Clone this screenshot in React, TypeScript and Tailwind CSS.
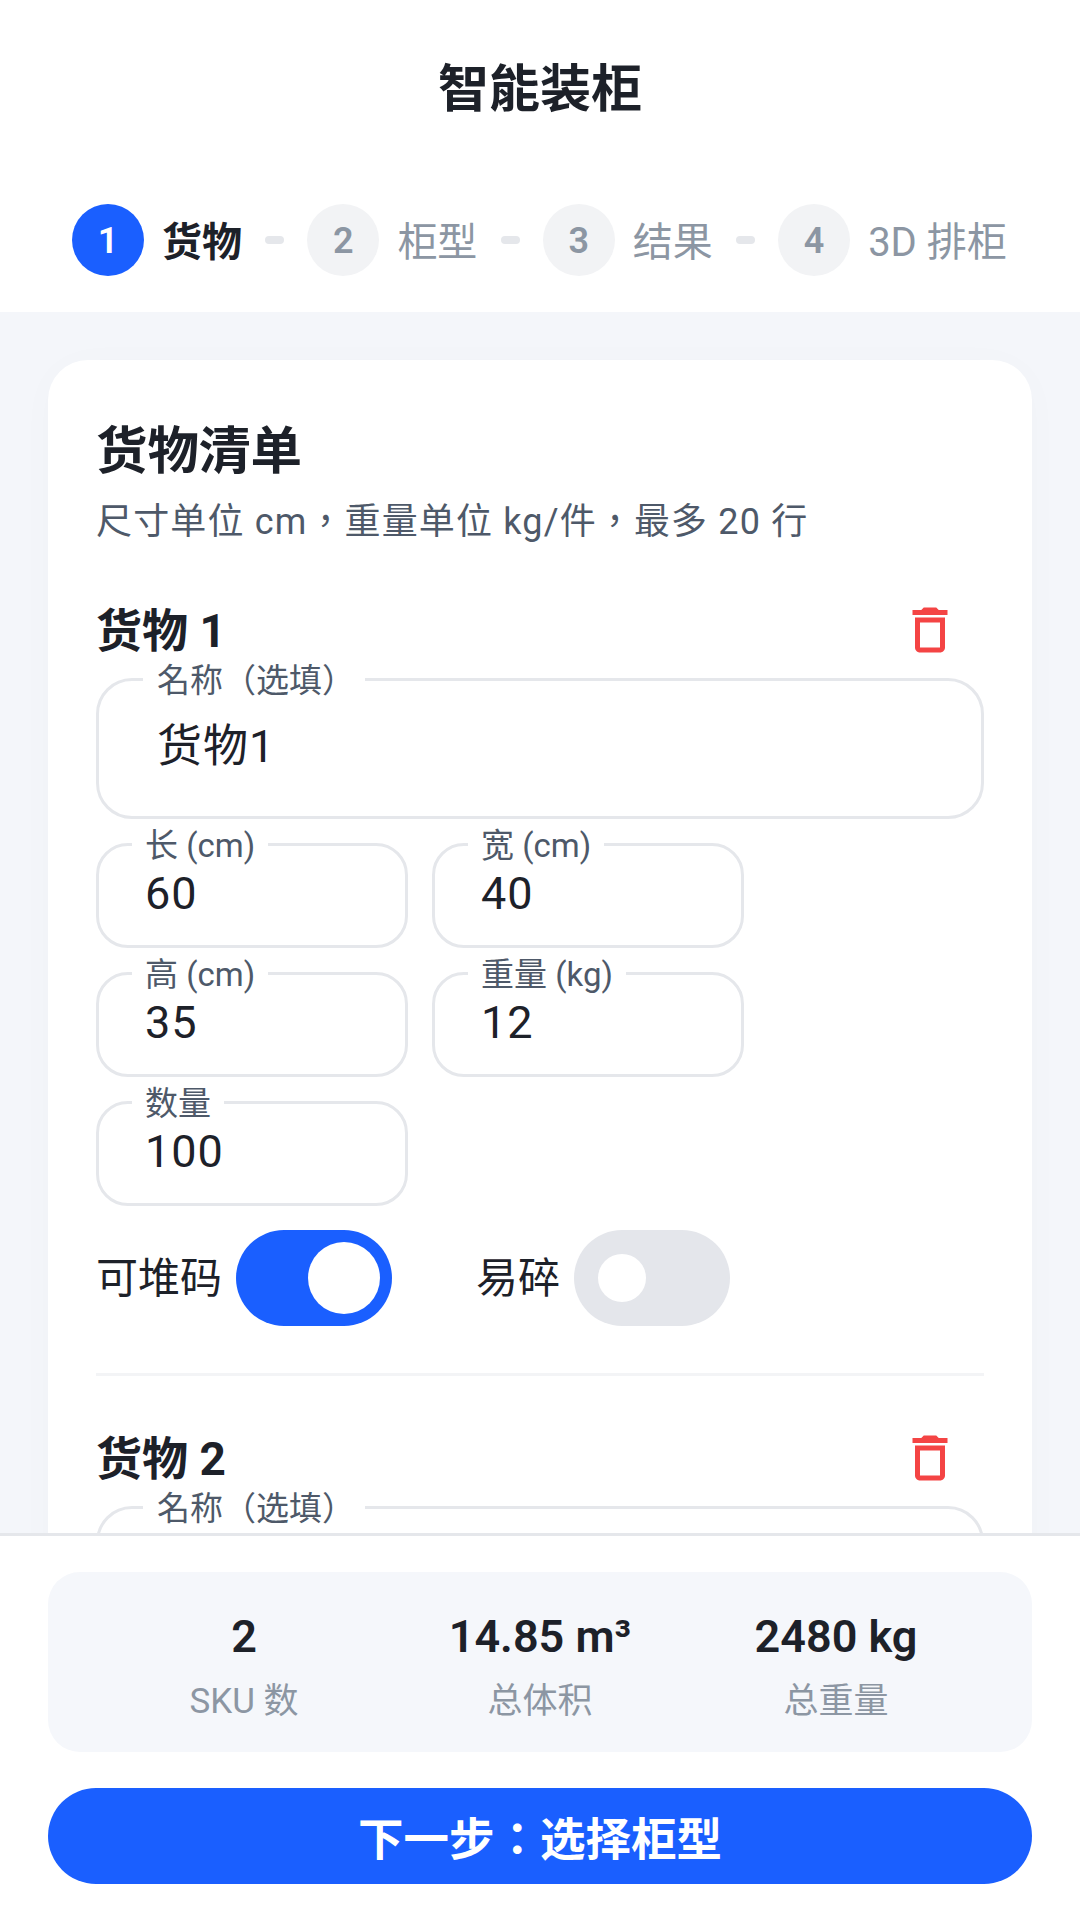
import React, { useState } from 'react';

const FONT = 'font-[Roboto,"Noto_Sans_CJK_TC",sans-serif]';

const STEPS = ['货物', '柜型', '结果', '3D 排柜'];

type Cargo = {
  name: string;
  length: number;
  width: number;
  height: number;
  weight: number;
  qty: number;
  stackable: boolean;
  fragile: boolean;
};

const INITIAL: Cargo[] = [
  { name: '货物1', length: 60, width: 40, height: 35, weight: 12, qty: 100, stackable: true, fragile: false },
  { name: '货物2', length: 75, width: 50, height: 43, weight: 32, qty: 40, stackable: true, fragile: false },
];

function TrashIcon() {
  return (
    <svg viewBox="0 0 24 24" className="w-[60px] h-[60px] fill-[#f44444]">
      <path d="M6 19c0 1.1.9 2 2 2h8c1.1 0 2-.9 2-2V7H6v12zM8 9h8v10H8V9zm7.5-5l-1-1h-5l-1 1H5v2h14V4z" />
    </svg>
  );
}

function Field({ label, value }: { label: string; value: string | number }) {
  return (
    <div className="relative h-[105px] rounded-[32px] border-[3px] border-[#e5e7eb] bg-white">
      <span className="absolute left-[33px] -top-[16px] bg-white px-[13px] text-[33px] leading-[32px] text-[#4e5969]">
        {label}
      </span>
      <input
        readOnly
        value={value}
        className="w-full h-[94px] pl-[46px] bg-transparent text-[45px] tracking-[1px] text-[#1d2129] outline-none"
      />
    </div>
  );
}

function Toggle({ label, on, onClick }: { label: string; on: boolean; onClick: () => void }) {
  return (
    <div className="flex items-center gap-[14px]">
      <span className="text-[42px] text-[#1d2129]">{label}</span>
      <button
        onClick={onClick}
        className={
          on
            ? 'flex items-center justify-end w-[156px] h-[96px] rounded-full bg-[#1a5fff] pr-[12px]'
            : 'flex items-center justify-start w-[156px] h-[96px] rounded-full bg-[#e4e6eb] pl-[24px]'
        }
      >
        <span className={on ? 'w-[72px] h-[72px] rounded-full bg-white' : 'w-[48px] h-[48px] rounded-full bg-white'} />
      </button>
    </div>
  );
}

function CargoItem({ index, cargo, onChange }: { index: number; cargo: Cargo; onChange: (c: Cargo) => void }) {
  return (
    <div>
      <div className="flex items-center justify-between h-[60px] pr-[24px]">
        <h3 className="pt-[3px] text-[46px] font-bold text-[#1d2129]">货物 {index + 1}</h3>
        <button>
          <TrashIcon />
        </button>
      </div>
      <div className="relative mt-[18px] h-[141px] rounded-[36px] border-[3px] border-[#e5e7eb]">
        <span className="absolute left-[44px] -top-[16px] bg-white pl-[14px] pr-[10px] text-[33px] leading-[32px] text-[#4e5969]">
          名称（选填）
        </span>
        <input
          readOnly
          value={cargo.name}
          className="w-full h-[122px] pl-[58px] bg-transparent text-[45px] tracking-[1px] text-[#1d2129] outline-none"
        />
      </div>
      <div className="grid grid-cols-[312px_312px] gap-x-[24px] gap-y-[24px] mt-[24px]">
        <Field label="长 (cm)" value={cargo.length} />
        <Field label="宽 (cm)" value={cargo.width} />
        <Field label="高 (cm)" value={cargo.height} />
        <Field label="重量 (kg)" value={cargo.weight} />
        <Field label="数量" value={cargo.qty} />
      </div>
      <div className="flex items-center gap-[84px] mt-[24px]">
        <Toggle label="可堆码" on={cargo.stackable} onClick={() => onChange({ ...cargo, stackable: !cargo.stackable })} />
        <Toggle label="易碎" on={cargo.fragile} onClick={() => onChange({ ...cargo, fragile: !cargo.fragile })} />
      </div>
    </div>
  );
}

export default function App() {
  const [items, setItems] = useState<Cargo[]>(INITIAL);

  return (
    <div className={`flex flex-col h-screen bg-white ${FONT}`}>
      <header className="bg-white">
        <h1 className="flex items-center justify-center h-[176px] pt-[5px] text-[51px] font-bold text-[#1d2129]">智能装柜</h1>
        <div className="flex items-center mt-[28px] mb-[36px] pl-[72px]">
          {STEPS.map((step, i) => (
            <React.Fragment key={step}>
              <div
                className={
                  i === 0
                    ? 'flex items-center justify-center w-[72px] h-[72px] pt-[2px] rounded-full bg-[#1a5fff] text-white text-[36px] font-semibold'
                    : 'flex items-center justify-center w-[72px] h-[72px] pt-[2px] rounded-full bg-[#f2f3f5] text-[#8c96a3] text-[36px] font-semibold'
                }
              >
                {i + 1}
              </div>
              <span
                className={
                  i === 0
                    ? 'ml-[18px] pt-[5px] text-[40px] font-bold text-[#1d2129] whitespace-nowrap'
                    : 'ml-[18px] pt-[5px] text-[40px] text-[#8c96a3] whitespace-nowrap'
                }
              >
                {step}
              </span>
              {i < STEPS.length - 1 && <div className="mx-[23.2px] w-[19px] h-[8px] rounded-full bg-[#e5e7eb]" />}
            </React.Fragment>
          ))}
        </div>
      </header>

      <main className="flex-1 min-h-0 overflow-hidden bg-[#f4f6fa] px-[48px] pt-[48px]">
        <section className="rounded-[40px] bg-white p-[48px] shadow-[0_4px_40px_rgba(0,0,0,0.02)]">
          <h2 className="pt-[3px] text-[51.5px] leading-[82px] font-bold text-[#1d2129]">货物清单</h2>
          <p className="pt-[3px] mt-[1px] text-[36px] leading-[50px] tracking-[1.15px] text-[#4e5969]">
            尺寸单位 cm，重量单位 kg/件，最多 20 行
          </p>
          <div className="mt-[53px]">
            {items.map((cargo, i) => (
              <React.Fragment key={i}>
                {i > 0 && <div className="h-[3px] mt-[47px] mb-[52px] bg-[#f3f4f6]" />}
                <CargoItem
                  index={i}
                  cargo={cargo}
                  onChange={(c) => setItems((prev) => prev.map((p, j) => (j === i ? c : p)))}
                />
              </React.Fragment>
            ))}
          </div>
        </section>
      </main>

      <footer className="border-t-[3px] border-[#e5e7eb] bg-white px-[48px] pt-[36px] pb-[36px]">
        <div className="grid grid-cols-3 h-[180px] items-center rounded-[32px] bg-[#f5f7fb] px-[48px]">
          {[
            ['2', 'SKU 数'],
            ['14.85 m³', '总体积'],
            ['2480 kg', '总重量'],
          ].map(([value, label]) => (
            <div key={label} className="flex flex-col items-center">
              <span className="pt-[7px] text-[45px] leading-[60px] font-semibold text-[#1d2129]">{value}</span>
              <span className="mt-[12px] text-[35px] leading-[46px] text-[#8c96a3]">{label}</span>
            </div>
          ))}
        </div>
        <button className="block w-full h-[96px] mt-[36px] pt-[10px] rounded-full bg-[#1a5fff] text-[45.5px] font-bold text-white">
          下一步：选择柜型
        </button>
      </footer>
    </div>
  );
}
